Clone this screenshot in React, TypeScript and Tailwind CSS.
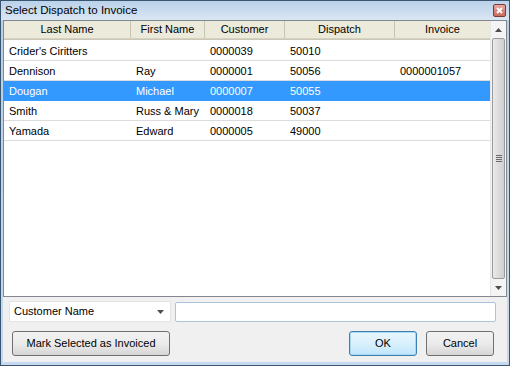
import React from 'react';

type Row = { last: string; first: string; customer: string; dispatch: string; invoice: string };

const rows: Row[] = [
  { last: "Crider's Ciritters", first: '', customer: '0000039', dispatch: '50010', invoice: '' },
  { last: 'Dennison', first: 'Ray', customer: '0000001', dispatch: '50056', invoice: '0000001057' },
  { last: 'Dougan', first: 'Michael', customer: '0000007', dispatch: '50055', invoice: '' },
  { last: 'Smith', first: 'Russ & Mary', customer: '0000018', dispatch: '50037', invoice: '' },
  { last: 'Yamada', first: 'Edward', customer: '0000005', dispatch: '49000', invoice: '' },
];

const cols = [
  { label: 'Last Name', w: 'w-[127px]', key: 'last' as const },
  { label: 'First Name', w: 'w-[74px]', key: 'first' as const },
  { label: 'Customer', w: 'w-[80px]', key: 'customer' as const },
  { label: 'Dispatch', w: 'w-[110px]', key: 'dispatch' as const },
  { label: 'Invoice', w: 'w-[95px]', key: 'invoice' as const },
];

function Arrow({ down }: { down?: boolean }) {
  return (
    <svg width="7" height="4" viewBox="0 0 7 4">
      <path d={down ? 'M0 0h7L3.5 4z' : 'M0 4h7L3.5 0z'} fill="#4d4d4d" />
    </svg>
  );
}

export default function App() {
  const selected = 2;
  return (
    <div className="w-[510px] h-[366px] border border-[#3a5570] bg-gradient-to-b from-[#b8cfe8] to-[#c6d9ee] flex flex-col text-[11px] text-black font-['Liberation_Sans',Arial,sans-serif]">
      {/* title bar */}
      <div className="h-[19px] flex items-center justify-between pl-[4px] pr-[3px] bg-gradient-to-b from-[#bad2ea] to-[#dae6f3]">
        <span className="text-[11.5px] leading-none text-black">Select Dispatch to Invoice</span>
        <div className="w-[13px] h-[13px] rounded-[2px] border border-[#7b3a3a] bg-gradient-to-b from-[#e7a8a0] to-[#c96a5e] flex items-center justify-center">
          <svg width="7" height="7" viewBox="0 0 7 7">
            <path d="M1 1l5 5M6 1l-5 5" stroke="white" strokeWidth="1.8" />
          </svg>
        </div>
      </div>

      {/* client */}
      <div className="flex-1 mx-[2px] mb-[3px] bg-[#f0f0f0] flex flex-col">
        {/* list view */}
        <div className="h-[277px] border border-[#828790] bg-white flex">
          <div className="flex-1 flex flex-col">
            <div className="h-[18px] flex bg-[#ebeadb] border-b border-[#d6d2c2] shadow-[0_1px_0_#cbc7b8]">
              {cols.map((c, i) => (
                <div
                  key={c.key}
                  className={`${c.w} flex items-center justify-center ${i < cols.length - 1 ? 'border-r border-[#c7c5b2]' : ''}`}
                >
                  {c.label}
                </div>
              ))}
              <div className="flex-1" />
            </div>
            <div className="flex flex-col pt-[2px]">
              {rows.map((r, ri) => (
                <div
                  key={r.customer}
                  className={`h-[20px] flex items-center border-b ${
                    ri === selected ? 'bg-[#3399ff] text-white border-[#3399ff]' : 'border-[#dcdcdc]'
                  }`}
                >
                  {cols.map((c) => (
                    <div key={c.key} className={`${c.w} pl-[5px] pt-[1px] whitespace-nowrap overflow-hidden`}>
                      {r[c.key]}
                    </div>
                  ))}
                </div>
              ))}
            </div>
          </div>
          {/* scrollbar */}
          <div className="w-[17px] bg-[#f4f4f4] border-l border-[#e6e6e6] flex flex-col">
            <div className="h-[17px] flex items-center justify-center">
              <Arrow />
            </div>
            <div className="flex-1 mx-[1px] border border-[#9b9b9b] rounded-[2px] bg-gradient-to-r from-[#eaeaea] via-[#dcdcdc] to-[#cfcfcf] flex items-center justify-center">
              <div className="flex flex-col gap-[1px]">
                <div className="w-[6px] h-[1px] bg-[#6a6a6a]" />
                <div className="w-[6px] h-[1px] bg-[#6a6a6a]" />
                <div className="w-[6px] h-[1px] bg-[#6a6a6a]" />
                <div className="w-[6px] h-[1px] bg-[#6a6a6a]" />
              </div>
            </div>
            <div className="h-[17px] flex items-center justify-center">
              <Arrow down />
            </div>
          </div>
        </div>

        {/* search row */}
        <div className="flex items-center mt-[4px] pl-[6px] pr-[11px] gap-[4px]">
          <div className="w-[162px] h-[21px] bg-white border border-[#e3e3e3] flex items-center justify-between pl-[4px] pr-[6px]">
            <span>Customer Name</span>
            <Arrow down />
          </div>
          <div className="flex-1 h-[20px] bg-white border border-[#a9c4dd] rounded-[2px]" />
        </div>

        {/* buttons */}
        <div className="flex items-center mt-[9px] pl-[9px] pr-[13px]">
          <button className="w-[158px] h-[25px] rounded-[3px] border border-[#707070] bg-gradient-to-b from-[#f2f2f2] via-[#ebebeb] to-[#d6d6d6] text-[11px]">
            Mark Selected as Invoiced
          </button>
          <div className="flex-1" />
          <button className="w-[68px] h-[25px] rounded-[3px] border border-[#3c7fb1] bg-gradient-to-b from-[#eaf6fd] via-[#d9f0fc] to-[#bee6fd] shadow-[inset_0_0_0_1px_#a7d9f5] text-[11px]">
            OK
          </button>
          <button className="w-[68px] h-[25px] ml-[9px] rounded-[3px] border border-[#707070] bg-gradient-to-b from-[#f2f2f2] via-[#ebebeb] to-[#d6d6d6] text-[11px]">
            Cancel
          </button>
        </div>
      </div>
    </div>
  );
}
